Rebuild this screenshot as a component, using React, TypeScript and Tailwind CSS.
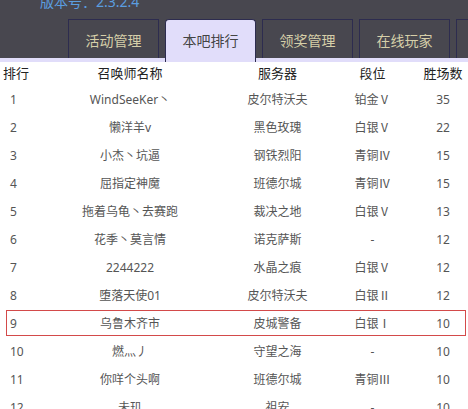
const rows = [
  ['1', 'WindSeeKer丶', '皮尔特沃夫', '铂金Ⅴ', '35'],
  ['2', '懒洋羊v', '黑色玫瑰', '白银Ⅴ', '22'],
  ['3', '小杰丶坑逼', '钢铁烈阳', '青铜Ⅳ', '15'],
  ['4', '屈指定神魔', '班德尔城', '青铜Ⅳ', '15'],
  ['5', '拖着乌龟丶去赛跑', '裁决之地', '白银Ⅴ', '13'],
  ['6', '花季丶莫言情', '诺克萨斯', '-', '12'],
  ['7', '2244222', '水晶之痕', '白银Ⅴ', '12'],
  ['8', '堕落天使01', '皮尔特沃夫', '白银Ⅱ', '12'],
  ['9', '乌鲁木齐市', '皮城警备', '白银Ⅰ', '10'],
  ['10', '燃灬丿', '守望之海', '-', '10'],
  ['11', '你咩个头啊', '班德尔城', '青铜Ⅲ', '10'],
  ['12', '未玑', '祖安', '-', '10'],
]

const tabs = ['活动管理', '本吧排行', '领奖管理', '在线玩家']

export default function App() {
  return (
    <div
      className="h-[409px] w-[468px] overflow-hidden bg-white"
      style={{ fontFamily: '"Microsoft YaHei", "Noto Sans", "Noto Sans CJK SC", sans-serif' }}
    >
      {/* 顶部 */}
      <div className="bg-[#48474f]">
        <div className="h-[19px] overflow-hidden pl-[40px]">
          <p className="-mt-[7px] text-[14px] leading-[18px] text-[#5b9ee0]">版本号：2.3.2.4</p>
        </div>
        <div className="flex h-[39px] gap-[6px] pl-[68px]">
          {tabs.map((t, i) =>
            i === 1 ? (
              <div
                key={t}
                className="-mb-[4px] flex h-[43px] w-[91px] shrink-0 items-center justify-center rounded-t-[4px] border border-b-0 border-[#2d2c4f] bg-[#e1ddfa] pb-[2px] text-[14px] text-[#444]"
              >
                {t}
              </div>
            ) : (
              <div
                key={t}
                className="flex h-[39px] w-[91px] shrink-0 items-center justify-center border border-b-0 border-[#2d2c4f] pt-[2px] text-[14px] text-[#d6cfa9]"
              >
                {t}
              </div>
            )
          )}
          <div className="h-[39px] w-[20px] shrink-0 border border-b-0 border-[#2d2c4f]" />
        </div>
        <div className="h-[4px] bg-[#e1ddfa]" />
      </div>

      {/* 表头 */}
      <div className="flex h-[24px] items-center text-[13px] text-[#222]">
        <div className="w-[45px] pl-[3px]">排行</div>
        <div className="w-[170px] text-center">召唤师名称</div>
        <div className="w-[125px] text-center">服务器</div>
        <div className="w-[65px] text-center">段位</div>
        <div className="flex-1 pl-[13px] text-center">胜场数</div>
      </div>

      {rows.map((r) => (
        <div key={r[0]} className="relative flex h-[28px] items-center text-[12px] text-[#555]">
          {r[0] === '9' && (
            <div className="absolute left-[6px] right-[2px] top-0 h-[26px] border border-[#d34a4a]" />
          )}
          <div className="w-[45px] pl-[10px]">{r[0]}</div>
          <div className="w-[170px] text-center">{r[1]}</div>
          <div className="w-[125px] text-center">{r[2]}</div>
          <div className="w-[65px] text-center">{r[3]}</div>
          <div className="flex-1 pl-[13px] text-center">{r[4]}</div>
        </div>
      ))}
    </div>
  )
}
